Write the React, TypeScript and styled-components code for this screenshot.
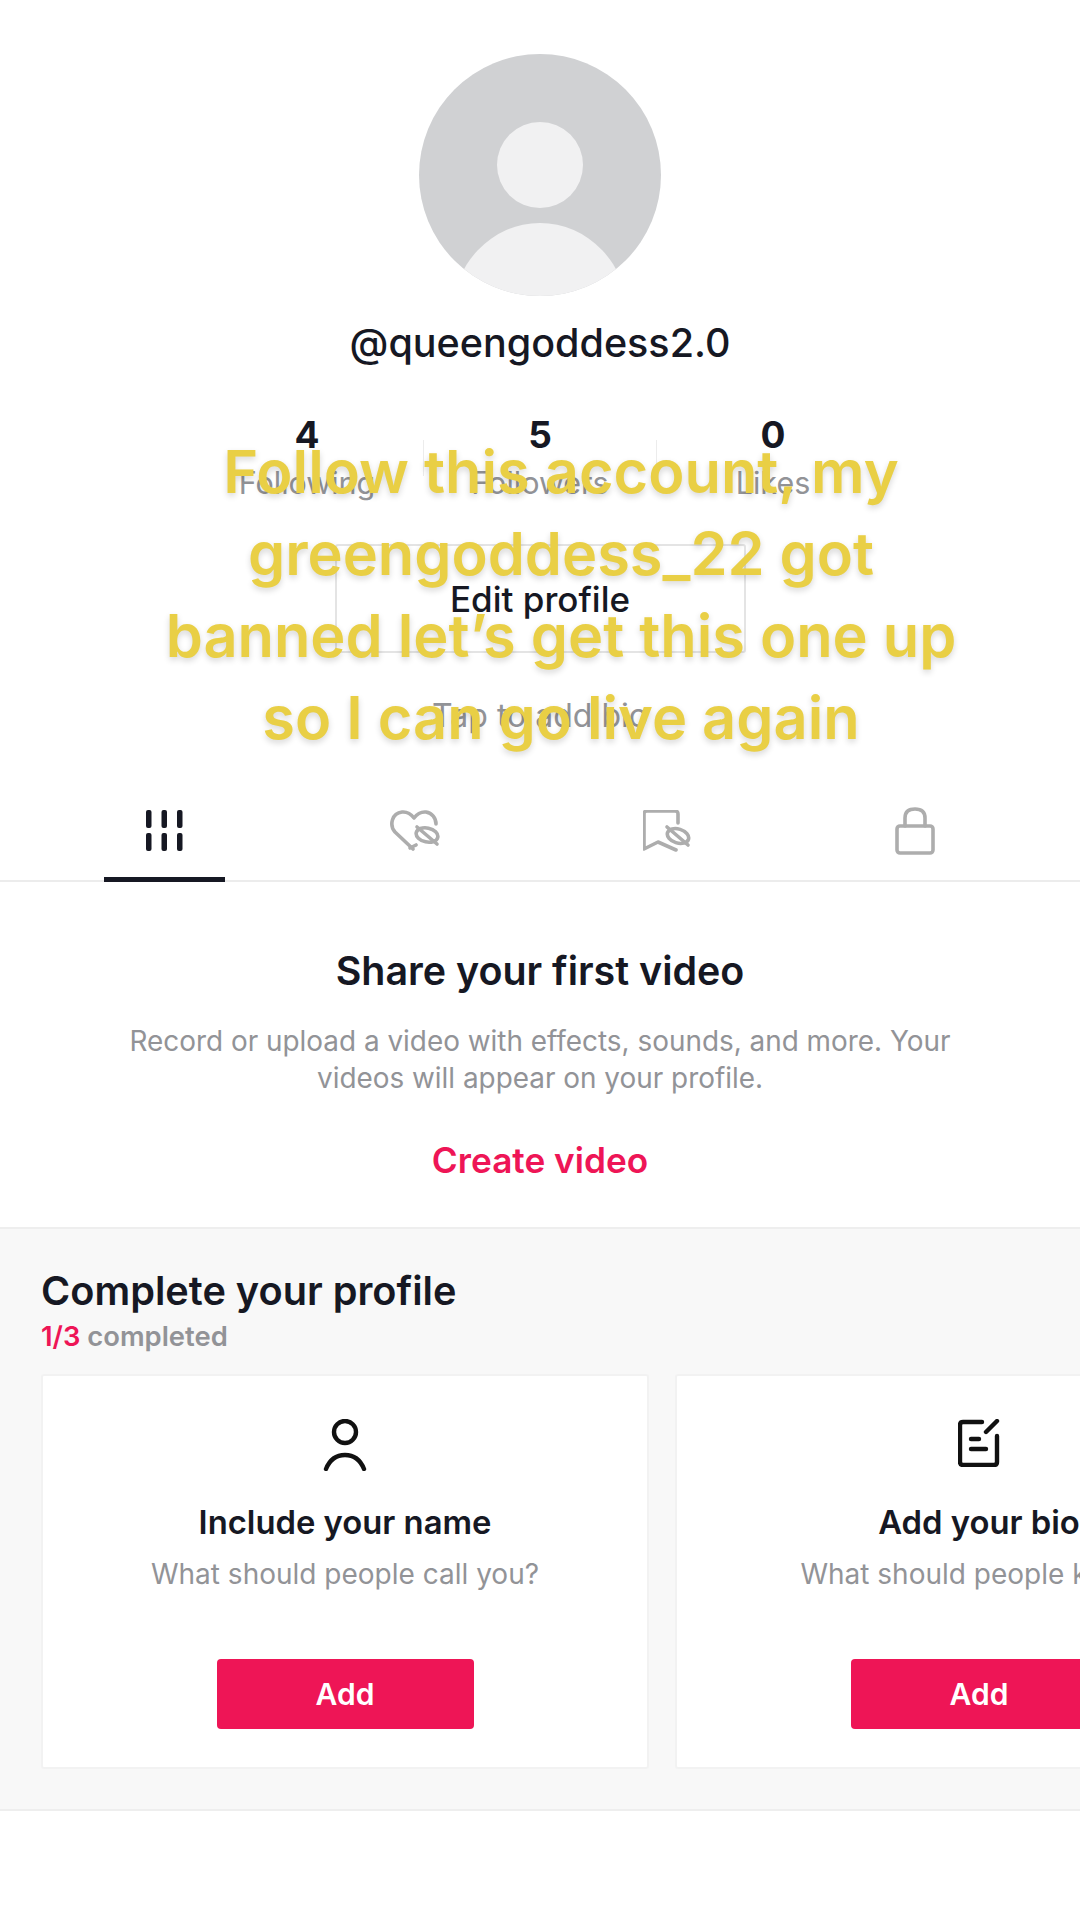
import React from 'react';
import styled, { createGlobalStyle } from 'styled-components';

const GlobalStyle = createGlobalStyle`
  html, body {
    margin: 0;
    padding: 0;
    background: #fff;
  }
  * {
    box-sizing: border-box;
  }
`;

const INK = '#161823';
const MUTED = '#929397';
const PINK = '#ee1556';
const TAB_GRAY = '#adadad';

const Page = styled.div`
  position: relative;
  width: 1080px;
  height: 1920px;
  overflow: hidden;
  background: #fff;
  font-family: 'Inter', 'Liberation Sans', sans-serif;
  color: ${INK};
`;

const ProfileHeader = styled.section`
  display: flex;
  flex-direction: column;
  align-items: center;
  padding-top: 54px;
`;

const Avatar = styled.svg`
  display: block;
  width: 242px;
  height: 242px;
`;

const Username = styled.div`
  margin-top: 23px;
  font-size: 39.5px;
  line-height: 48px;
  font-weight: 500;
`;

const Stats = styled.div`
  display: flex;
  align-items: center;
  margin-top: 48px;
`;

const Stat = styled.div`
  width: 232px;
  display: flex;
  flex-direction: column;
  align-items: center;
`;

const StatValue = styled.div`
  font-size: 37px;
  line-height: 40px;
  font-weight: 700;
`;

const StatLabel = styled.div`
  margin-top: 10px;
  font-size: 30.5px;
  line-height: 36px;
  color: ${MUTED};
`;

const StatDivider = styled.div`
  width: 1px;
  height: 36px;
  background: #ececec;
`;

const EditButton = styled.button`
  display: flex;
  align-items: center;
  justify-content: center;
  margin-top: 43px;
  width: 411px;
  height: 109px;
  padding: 0;
  background: #fff;
  border: 2px solid #e4e4e4;
  border-radius: 3px;
  font-family: inherit;
  font-size: 35px;
  font-weight: 500;
  color: ${INK};
`;

const BioHint = styled.div`
  margin-top: 45px;
  font-size: 32px;
  line-height: 36px;
  color: ${MUTED};
`;

const Tabs = styled.nav`
  display: flex;
  height: 100px;
  margin-top: 48px;
  padding: 0 40px;
  border-bottom: 2px solid #ececec;
`;

const Tab = styled.div<{ $active?: boolean }>`
  position: relative;
  width: 250px;
  display: flex;
  justify-content: center;
  padding-top: 28px;

  ${(p) =>
    p.$active &&
    `
    &::after {
      content: '';
      position: absolute;
      left: 64px;
      bottom: -2px;
      width: 121px;
      height: 5px;
      background: ${INK};
    }
  `}
`;

const TabIcon = styled.svg`
  display: block;
  fill: none;
  stroke: ${TAB_GRAY};
  stroke-width: 3.6;
  stroke-linecap: round;
  stroke-linejoin: round;
`;

const BookmarkIcon = styled(TabIcon)`
  margin-left: 3px;
`;

const LockIcon = styled(TabIcon)`
  margin-top: -3px;
`;

const EmptyState = styled.section`
  display: flex;
  flex-direction: column;
  align-items: center;
  padding: 65px 0 45px;
`;

const EmptyTitle = styled.h2`
  margin: 0;
  font-size: 39.4px;
  line-height: 48px;
  font-weight: 600;
`;

const EmptyText = styled.p`
  margin: 28px 0 0;
  font-size: 27.9px;
  line-height: 37px;
  color: ${MUTED};
  text-align: center;
`;

const CreateLink = styled.a`
  margin-top: 41px;
  font-size: 35.2px;
  line-height: 44px;
  font-weight: 600;
  color: ${PINK};
`;

const ChecklistSection = styled.section`
  height: 584px;
  padding: 38px 0 0 41px;
  background: #f8f8f8;
  border-top: 2px solid #eeeeee;
  border-bottom: 2px solid #eeeeee;
`;

const ChecklistTitle = styled.h3`
  margin: 0;
  font-size: 39.7px;
  line-height: 48px;
  font-weight: 600;
`;

const ChecklistProgress = styled.div`
  margin-top: 5px;
  font-size: 27.4px;
  line-height: 32px;
  font-weight: 600;
  color: ${MUTED};
`;

const ProgressCount = styled.span`
  color: ${PINK};
`;

const CardRow = styled.div`
  display: flex;
  gap: 26px;
  margin-top: 22px;
`;

const Card = styled.div`
  flex: none;
  width: 608px;
  height: 395px;
  display: flex;
  flex-direction: column;
  align-items: center;
  padding-top: 43px;
  background: #fff;
  border: 2px solid #f2f2f2;
  border-radius: 3px;
`;

const CardIcon = styled.svg`
  display: block;
  fill: none;
  stroke: #111;
  stroke-width: 4.4;
  stroke-linecap: round;
  stroke-linejoin: round;
`;

const CardIconSlot = styled.div`
  height: 54px;
`;

const CardTitle = styled.div`
  margin-top: 29px;
  font-size: 32.8px;
  line-height: 40px;
  font-weight: 600;
  white-space: nowrap;
`;

const CardText = styled.div`
  margin-top: 14px;
  font-size: 28px;
  line-height: 36px;
  color: ${MUTED};
  white-space: nowrap;
`;

const AddButton = styled.button`
  margin-top: 67px;
  width: 257px;
  height: 70px;
  padding: 0;
  border: 0;
  border-radius: 4px;
  background: ${PINK};
  color: #fff;
  font-family: inherit;
  font-size: 30px;
  font-weight: 600;
`;

// caption burnt over the profile, sits slightly right of centre
const Caption = styled.div`
  position: absolute;
  top: 430px;
  left: 0;
  width: 1122px;
  text-align: center;
  font-size: 59.5px;
  line-height: 82px;
  font-weight: 600;
  color: #e9cf45;
  text-shadow: 0 3px 6px rgba(0, 0, 0, 0.16);
  pointer-events: none;
`;

const CaptionLine = styled.div`
  white-space: nowrap;
`;

const stats = [
  { value: '4', label: 'Following' },
  { value: '5', label: 'Followers' },
  { value: '0', label: 'Likes' },
];

const captionLines = [
  'Follow this account, my',
  'greengoddess_22 got',
  'banned let’s get this one up',
  'so I can go live again',
];

const App: React.FC = () => {
  return (
    <Page>
      <GlobalStyle />
      <ProfileHeader>
        <Avatar viewBox="0 0 242 242">
          <defs>
            <clipPath id="avatar-clip">
              <circle cx="121" cy="121" r="121" />
            </clipPath>
          </defs>
          <circle cx="121" cy="121" r="121" fill="#d0d1d3" />
          <circle cx="121" cy="111" r="43" fill="#f1f1f2" />
          <ellipse cx="121" cy="262" rx="88" ry="93" fill="#f1f1f2" clipPath="url(#avatar-clip)" />
        </Avatar>
        <Username>@queengoddess2.0</Username>
        <Stats>
          {stats.map((s, i) => (
            <React.Fragment key={s.label}>
              {i > 0 && <StatDivider />}
              <Stat>
                <StatValue>{s.value}</StatValue>
                <StatLabel>{s.label}</StatLabel>
              </Stat>
            </React.Fragment>
          ))}
        </Stats>
        <EditButton>Edit profile</EditButton>
        <BioHint>Tap to add bio</BioHint>
      </ProfileHeader>

      <Tabs>
        <Tab $active>
          <svg width="38" height="42" viewBox="0 0 38 42" fill="#161823">
            <rect x="0" y="0" width="5.5" height="18" rx="2" />
            <rect x="15.5" y="0" width="5.5" height="18" rx="2" />
            <rect x="31" y="0" width="5.5" height="18" rx="2" />
            <rect x="0" y="23" width="5.5" height="18" rx="2" />
            <rect x="15.5" y="23" width="5.5" height="18" rx="2" />
            <rect x="31" y="23" width="5.5" height="18" rx="2" />
          </svg>
        </Tab>
        <Tab>
          <TabIcon width="50" height="42" viewBox="0 0 50 42">
            <path d="M23 39 L5 22 C-1 15 2 3 12 2 C17 1.5 21 4 24 8 C27 4 31 1.5 36 2 C42 3 46 8 46 14" />
            <path d="M20 38 L26 35" />
            <ellipse cx="37" cy="25" rx="11" ry="7" transform="rotate(12 37 25)" />
            <path d="M27 17 L47 34" />
          </TabIcon>
        </Tab>
        <Tab>
          <BookmarkIcon width="48" height="42" viewBox="0 0 48 42">
            <path d="M35 13 V4 Q35 1 32 1 H4 Q1 1 1 4 V39 L15 32 L33 40" />
            <ellipse cx="35" cy="26" rx="11" ry="7" transform="rotate(18 35 26)" />
            <path d="M24 17 L45 35" />
          </BookmarkIcon>
        </Tab>
        <Tab>
          <LockIcon width="40" height="48" viewBox="0 0 40 48">
            <rect x="2" y="19" width="36" height="27" rx="3" />
            <path d="M10 19 V11 C10 4 14 2 20 2 C26 2 30 4 30 11 V19" />
          </LockIcon>
        </Tab>
      </Tabs>

      <EmptyState>
        <EmptyTitle>Share your first video</EmptyTitle>
        <EmptyText>
          Record or upload a video with effects, sounds, and more. Your
          <br />
          videos will appear on your profile.
        </EmptyText>
        <CreateLink>Create video</CreateLink>
      </EmptyState>

      <ChecklistSection>
        <ChecklistTitle>Complete your profile</ChecklistTitle>
        <ChecklistProgress>
          <ProgressCount>1/3</ProgressCount> completed
        </ChecklistProgress>
        <CardRow>
          <Card>
            <CardIconSlot>
              <CardIcon width="44" height="52" viewBox="0 0 44 52">
                <circle cx="22" cy="13" r="11" />
                <path d="M3 50 C7 40 14 36 22 36 C30 36 37 40 41 50" />
              </CardIcon>
            </CardIconSlot>
            <CardTitle>Include your name</CardTitle>
            <CardText>What should people call you?</CardText>
            <AddButton>Add</AddButton>
          </Card>
          <Card>
            <CardIconSlot>
              <CardIcon width="42" height="48" viewBox="0 0 42 48">
                <path d="M24 3 H5 Q2 3 2 6 V43 Q2 46 5 46 H36 Q39 46 39 43 V17" />
                <path d="M28 13 L39 2" />
                <path d="M13 20 H21" />
                <path d="M13 30 H28" />
              </CardIcon>
            </CardIconSlot>
            <CardTitle>Add your bio</CardTitle>
            <CardText>What should people know?</CardText>
            <AddButton>Add</AddButton>
          </Card>
        </CardRow>
      </ChecklistSection>

      <Caption>
        {captionLines.map((line) => (
          <CaptionLine key={line}>{line}</CaptionLine>
        ))}
      </Caption>
    </Page>
  );
};

export default App;
